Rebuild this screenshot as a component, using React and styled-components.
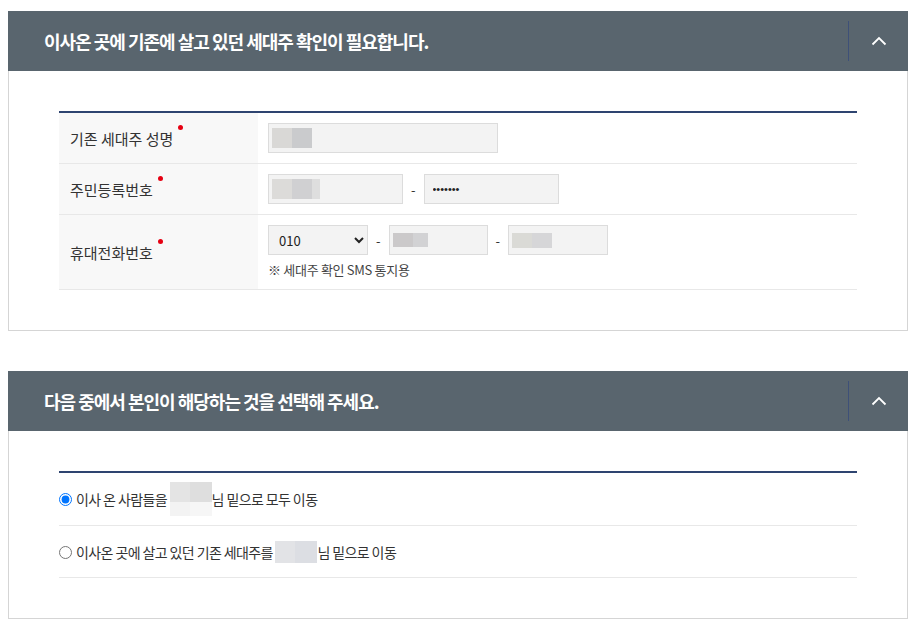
import React, { useState } from "react";
import styled, { createGlobalStyle } from "styled-components";

const GlobalStyle = createGlobalStyle`
  body {
    margin: 0;
    background: #fff;
    font-family: "Noto Sans CJK KR", "Noto Sans", sans-serif;
    color: #333;
  }
`;

const Page = styled.div`
  width: 900px;
  padding: 11px 8px;
  display: flex;
  flex-direction: column;
  gap: 40px;
`;

const Panel = styled.section`
  border: 1px solid #d5d5d5;
  border-top: none;
  background: #fff;
`;

const PanelHeader = styled.header`
  height: 60px;
  margin: 0 -1px;
  background: #59656e;
  display: flex;
  align-items: center;
`;

const Title = styled.h2`
  flex: 1;
  margin: 0;
  padding-left: 36px;
  color: #fff;
  font-size: 18px;
  font-weight: 700;
  letter-spacing: -1px;
`;

const Divider = styled.span`
  width: 1px;
  height: 40px;
  background: #3e5078;
`;

const Toggle = styled.button`
  width: 59px;
  height: 60px;
  border: none;
  background: transparent;
  display: flex;
  align-items: center;
  justify-content: center;
  cursor: pointer;
  padding: 0;
`;

const PanelBody = styled.div`
  padding: 40px 50px;
`;

const Table = styled.div`
  border-top: 2px solid #2e4470;
`;

const Row = styled.div`
  display: grid;
  grid-template-columns: 199px 1fr;
  border-bottom: 1px solid #e8e8e8;
`;

const LabelCell = styled.div`
  background: #f8f8f8;
  padding: 0 11px;
  display: flex;
  align-items: center;
  font-size: 15px;
  color: #333;
`;

const Required = styled.span`
  position: relative;
  &::after {
    content: "";
    position: absolute;
    right: -10px;
    top: -3px;
    width: 5px;
    height: 5px;
    border-radius: 50%;
    background: #e60012;
  }
`;

const FieldCell = styled.div`
  padding: 10px;
  display: flex;
  flex-direction: column;
  gap: 5px;
`;

const FieldLine = styled.div`
  display: flex;
  align-items: center;
  gap: 8px;
`;

const InputBox = styled.div`
  width: ${(p) => p.$w}px;
  height: 30px;
  box-sizing: border-box;
  border: 1px solid #dcdcdc;
  background: #f3f3f3;
  display: flex;
  align-items: center;
  padding: 0 3px;
`;

const PasswordInput = styled.input`
  width: ${(p) => p.$w}px;
  height: 30px;
  box-sizing: border-box;
  border: 1px solid #dcdcdc;
  background: #f3f3f3;
  padding: 0 8px;
  font-size: 11px;
  color: #222;
  outline: none;
`;

const Select = styled.select`
  width: 100px;
  height: 30px;
  box-sizing: border-box;
  border: 1px solid #dcdcdc;
  background: #f3f3f3;
  padding: 0 6px;
  font-family: "Noto Sans CJK KR", sans-serif;
  font-size: 13px;
  color: #222;
`;

const Dash = styled.span`
  font-size: 13px;
  color: #333;
`;

const Note = styled.p`
  margin: 0;
  font-size: 13px;
  letter-spacing: -0.3px;
  color: #444;
`;

const Blur = styled.span`
  display: inline-flex;
  flex-direction: column;
  vertical-align: middle;
`;

const BlurLine = styled.span`
  display: flex;
  height: ${(p) => p.$h}px;
`;

const BlurCell = styled.span`
  width: ${(p) => p.$w}px;
  background: ${(p) => p.$c};
`;

const Masked = ({ cells, h = 20, lower }) => (
  <Blur>
    <BlurLine $h={h}>
      {cells.map((c, i) => (
        <BlurCell key={i} $w={c[0]} $c={c[1]} />
      ))}
    </BlurLine>
    {lower && (
      <BlurLine $h={lower.h}>
        {lower.cells.map((c, i) => (
          <BlurCell key={i} $w={c[0]} $c={c[1]} />
        ))}
      </BlurLine>
    )}
  </Blur>
);

const ChoiceRow = styled.label`
  display: flex;
  align-items: center;
  height: ${(p) => p.$h}px;
  border-bottom: 1px solid #e8e8e8;
  font-size: 14px;
  letter-spacing: -0.6px;
  color: #333;
  cursor: pointer;
`;

const Radio = styled.input`
  margin: 1px 4px 0 0;
  width: 13px;
  height: 13px;
`;

const Chevron = () => (
  <svg width="16" height="10" viewBox="0 0 16 10" fill="none">
    <path d="M1.5 8.5 L8 2 L14.5 8.5" stroke="#fff" strokeWidth="1.8" />
  </svg>
);

const PanelTop = ({ title }) => (
  <PanelHeader>
    <Title>{title}</Title>
    <Divider />
    <Toggle aria-label="접기">
      <Chevron />
    </Toggle>
  </PanelHeader>
);

export default function App() {
  const [choice, setChoice] = useState("a");

  return (
    <>
      <GlobalStyle />
      <Page>
        <Panel>
          <PanelTop title="이사온 곳에 기존에 살고 있던 세대주 확인이 필요합니다." />
          <PanelBody>
            <Table>
              <Row>
                <LabelCell>
                  <Required>기존 세대주 성명</Required>
                </LabelCell>
                <FieldCell>
                  <FieldLine>
                    <InputBox $w={230}>
                      <Masked cells={[[20, "#d9d8d6"], [20, "#cacbcd"]]} />
                    </InputBox>
                  </FieldLine>
                </FieldCell>
              </Row>
              <Row>
                <LabelCell>
                  <Required>주민등록번호</Required>
                </LabelCell>
                <FieldCell>
                  <FieldLine>
                    <InputBox $w={135}>
                      <Masked cells={[[20, "#dcdbd9"], [20, "#d0d0d2"], [8, "#dedede"]]} />
                    </InputBox>
                    <Dash>-</Dash>
                    <PasswordInput $w={135} type="password" defaultValue="1234567" readOnly />
                  </FieldLine>
                </FieldCell>
              </Row>
              <Row>
                <LabelCell>
                  <Required>휴대전화번호</Required>
                </LabelCell>
                <FieldCell>
                  <FieldLine>
                    <Select defaultValue="010">
                      <option>010</option>
                      <option>011</option>
                      <option>016</option>
                    </Select>
                    <Dash>-</Dash>
                    <InputBox $w={99}>
                      <Masked cells={[[20, "#cbc9ca"], [15, "#d2d2d4"]]} h={14} />
                    </InputBox>
                    <Dash>-</Dash>
                    <InputBox $w={100}>
                      <Masked cells={[[20, "#dadad6"], [20, "#d6d6d8"]]} h={15} />
                    </InputBox>
                  </FieldLine>
                  <Note>※ 세대주 확인 SMS 통지용</Note>
                </FieldCell>
              </Row>
            </Table>
          </PanelBody>
        </Panel>

        <Panel>
          <PanelTop title="다음 중에서 본인이 해당하는 것을 선택해 주세요." />
          <PanelBody>
            <Table>
              <ChoiceRow $h={52}>
                <Radio
                  type="radio"
                  name="move"
                  checked={choice === "a"}
                  onChange={() => setChoice("a")}
                />
                이사 온 사람들을&nbsp;
                <Masked
                  cells={[[20, "#e4e4e4"], [22, "#dedede"]]}
                  h={20}
                  lower={{ h: 14, cells: [[20, "#f3f3f3"], [22, "#f6f6f6"]] }}
                />
                님 밑으로 모두 이동
              </ChoiceRow>
              <ChoiceRow $h={51}>
                <Radio
                  type="radio"
                  name="move"
                  checked={choice === "b"}
                  onChange={() => setChoice("b")}
                />
                이사온 곳에 살고 있던 기존 세대주를&nbsp;
                <Masked cells={[[20, "#e2e3e6"], [22, "#dcdee3"]]} h={22} />
                님 밑으로 이동
              </ChoiceRow>
            </Table>
          </PanelBody>
        </Panel>
      </Page>
    </>
  );
}
